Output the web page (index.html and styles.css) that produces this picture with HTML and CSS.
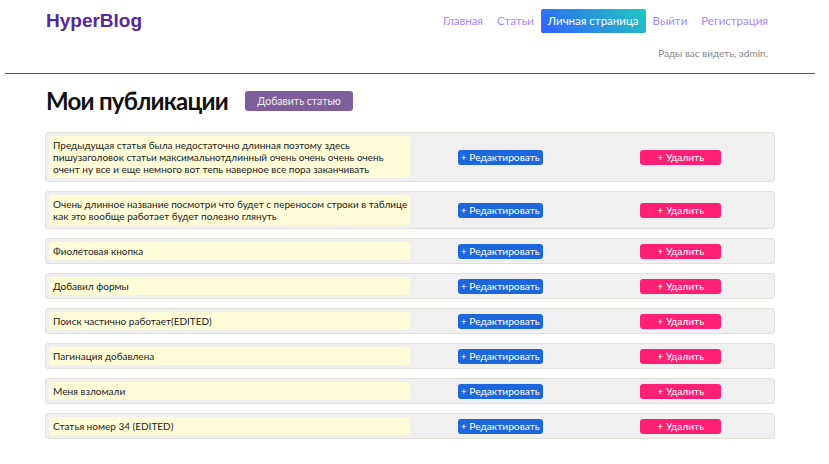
FILE: index.html
```html
<!DOCTYPE html>
<html lang="ru">
<head>
<meta charset="utf-8">
<title>HyperBlog</title>
<link rel="stylesheet" href="styles.css">
</head>
<body>
<header class="site-header">
  <div class="container">
    <div class="topbar">
      <a class="logo" href="#">HyperBlog</a>
      <nav class="nav">
        <a class="nav-link" href="#">Главная</a>
        <a class="nav-link" href="#">Статьи</a>
        <a class="nav-link active" href="#">Личная страница</a>
        <a class="nav-link" href="#">Выйти</a>
        <a class="nav-link" href="#">Регистрация</a>
      </nav>
    </div>
    <div class="greeting">Рады вас видеть, admin.</div>
  </div>
</header>
<hr class="divider">
<main class="container">
  <div class="title-row">
    <h1 class="page-title">Мои публикации</h1>
    <a class="btn-add" href="#">Добавить статью</a>
  </div>
  <div class="posts">
    <div class="post">
      <div class="post-title">Предыдущая статья была недостаточно длинная поэтому здесь пишузаголовок статьи максимальнотдлинный очень очень очень очень очент ну все и еще немного вот тепь наверное все пора заканчивать</div>
      <div class="post-cell"><a class="btn btn-edit" href="#">+ Редактировать</a></div>
      <div class="post-cell"><a class="btn btn-delete" href="#">+ Удалить</a></div>
    </div>
    <div class="post">
      <div class="post-title">Очень длинное название посмотри что будет с переносом строки в таблице как это вообще работает будет полезно глянуть</div>
      <div class="post-cell"><a class="btn btn-edit" href="#">+ Редактировать</a></div>
      <div class="post-cell"><a class="btn btn-delete" href="#">+ Удалить</a></div>
    </div>
    <div class="post">
      <div class="post-title">Фиолетовая кнопка</div>
      <div class="post-cell"><a class="btn btn-edit" href="#">+ Редактировать</a></div>
      <div class="post-cell"><a class="btn btn-delete" href="#">+ Удалить</a></div>
    </div>
    <div class="post">
      <div class="post-title">Добавил формы</div>
      <div class="post-cell"><a class="btn btn-edit" href="#">+ Редактировать</a></div>
      <div class="post-cell"><a class="btn btn-delete" href="#">+ Удалить</a></div>
    </div>
    <div class="post">
      <div class="post-title">Поиск частично работает(EDITED)</div>
      <div class="post-cell"><a class="btn btn-edit" href="#">+ Редактировать</a></div>
      <div class="post-cell"><a class="btn btn-delete" href="#">+ Удалить</a></div>
    </div>
    <div class="post">
      <div class="post-title">Пагинация добавлена</div>
      <div class="post-cell"><a class="btn btn-edit" href="#">+ Редактировать</a></div>
      <div class="post-cell"><a class="btn btn-delete" href="#">+ Удалить</a></div>
    </div>
    <div class="post">
      <div class="post-title">Меня взломали</div>
      <div class="post-cell"><a class="btn btn-edit" href="#">+ Редактировать</a></div>
      <div class="post-cell"><a class="btn btn-delete" href="#">+ Удалить</a></div>
    </div>
    <div class="post">
      <div class="post-title">Статья номер 34 (EDITED)</div>
      <div class="post-cell"><a class="btn btn-edit" href="#">+ Редактировать</a></div>
      <div class="post-cell"><a class="btn btn-delete" href="#">+ Удалить</a></div>
    </div>
  </div>
</main>
</body>
</html>
```
FILE: styles.css
```css
* { box-sizing: border-box; }
html, body { margin: 0; padding: 0; background: #fff; }
body {
  font-family: Lato, "Open Sans", sans-serif;
  color: #222;
}
a { text-decoration: none; }

.container {
  margin: 0 54px 0 45px;
}

.site-header .container { padding-top: 9px; }

.topbar {
  display: flex;
  justify-content: space-between;
  align-items: center;
}

.logo {
  font-family: "Liberation Sans", Arial, sans-serif;
  font-weight: bold;
  font-size: 19px;
  line-height: 24px;
  color: #55289c;
  padding-left: 1px;
}

.nav { display: flex; align-items: center; }
.nav-link {
  font-size: 11.5px;
  line-height: 24px;
  height: 24px;
  padding: 0 7px;
  color: #a78bfa;
  border-radius: 2px;
}
.nav-link.active {
  color: #fff;
  background: linear-gradient(45deg, #3160ff 0%, #1fcabd 100%);
}

.greeting {
  margin-top: 14px;
  text-align: right;
  padding-right: 7px;
  font-size: 10px;
  line-height: 12px;
  color: #888;
}

.divider {
  margin: 14px 14px 0 5px;
  border: 0;
  border-top: 1px solid #6e4d86;
  height: 0;
}

.title-row {
  display: flex;
  align-items: center;
  gap: 17px;
  margin-top: 12px;
}
.page-title {
  margin: 0;
  padding-left: 1px;
  font-size: 24px;
  letter-spacing: -0.75px;
  line-height: 30px;
  font-weight: 700;
  color: #111;
}
.btn-add {
  display: inline-block;
  height: 20px;
  line-height: 20px;
  width: 108px;
  text-align: center;
  font-size: 10.5px;
  color: #eee;
  background: #7e5f9a;
  border-radius: 3px;
}

.posts {
  margin-top: 16px;
  display: flex;
  flex-direction: column;
  gap: 9px;
}
.post {
  display: grid;
  grid-template-columns: 361px 1fr 1fr;
  align-items: center;
  padding: 3px;
  background: #f0f0f0;
  border: 1px solid #e1e1da;
  border-radius: 3px;
}
.post-title {
  align-self: stretch;
  background: #fffcd8;
  border-radius: 3px;
  padding: 3px 0 3px 4px;
  font-size: 10px;
  line-height: 12px;
  color: #222;
}
.post-cell {
  display: flex;
  justify-content: center;
}
.btn {
  display: inline-block;
  min-width: 81px;
  height: 15px;
  line-height: 15px;
  padding: 0 3px;
  text-align: center;
  font-size: 10.2px;
  color: #fff;
  border-radius: 3px;
}
.btn-edit { background: #1c66de; }
.btn-delete { background: #ff1f74; }
```
